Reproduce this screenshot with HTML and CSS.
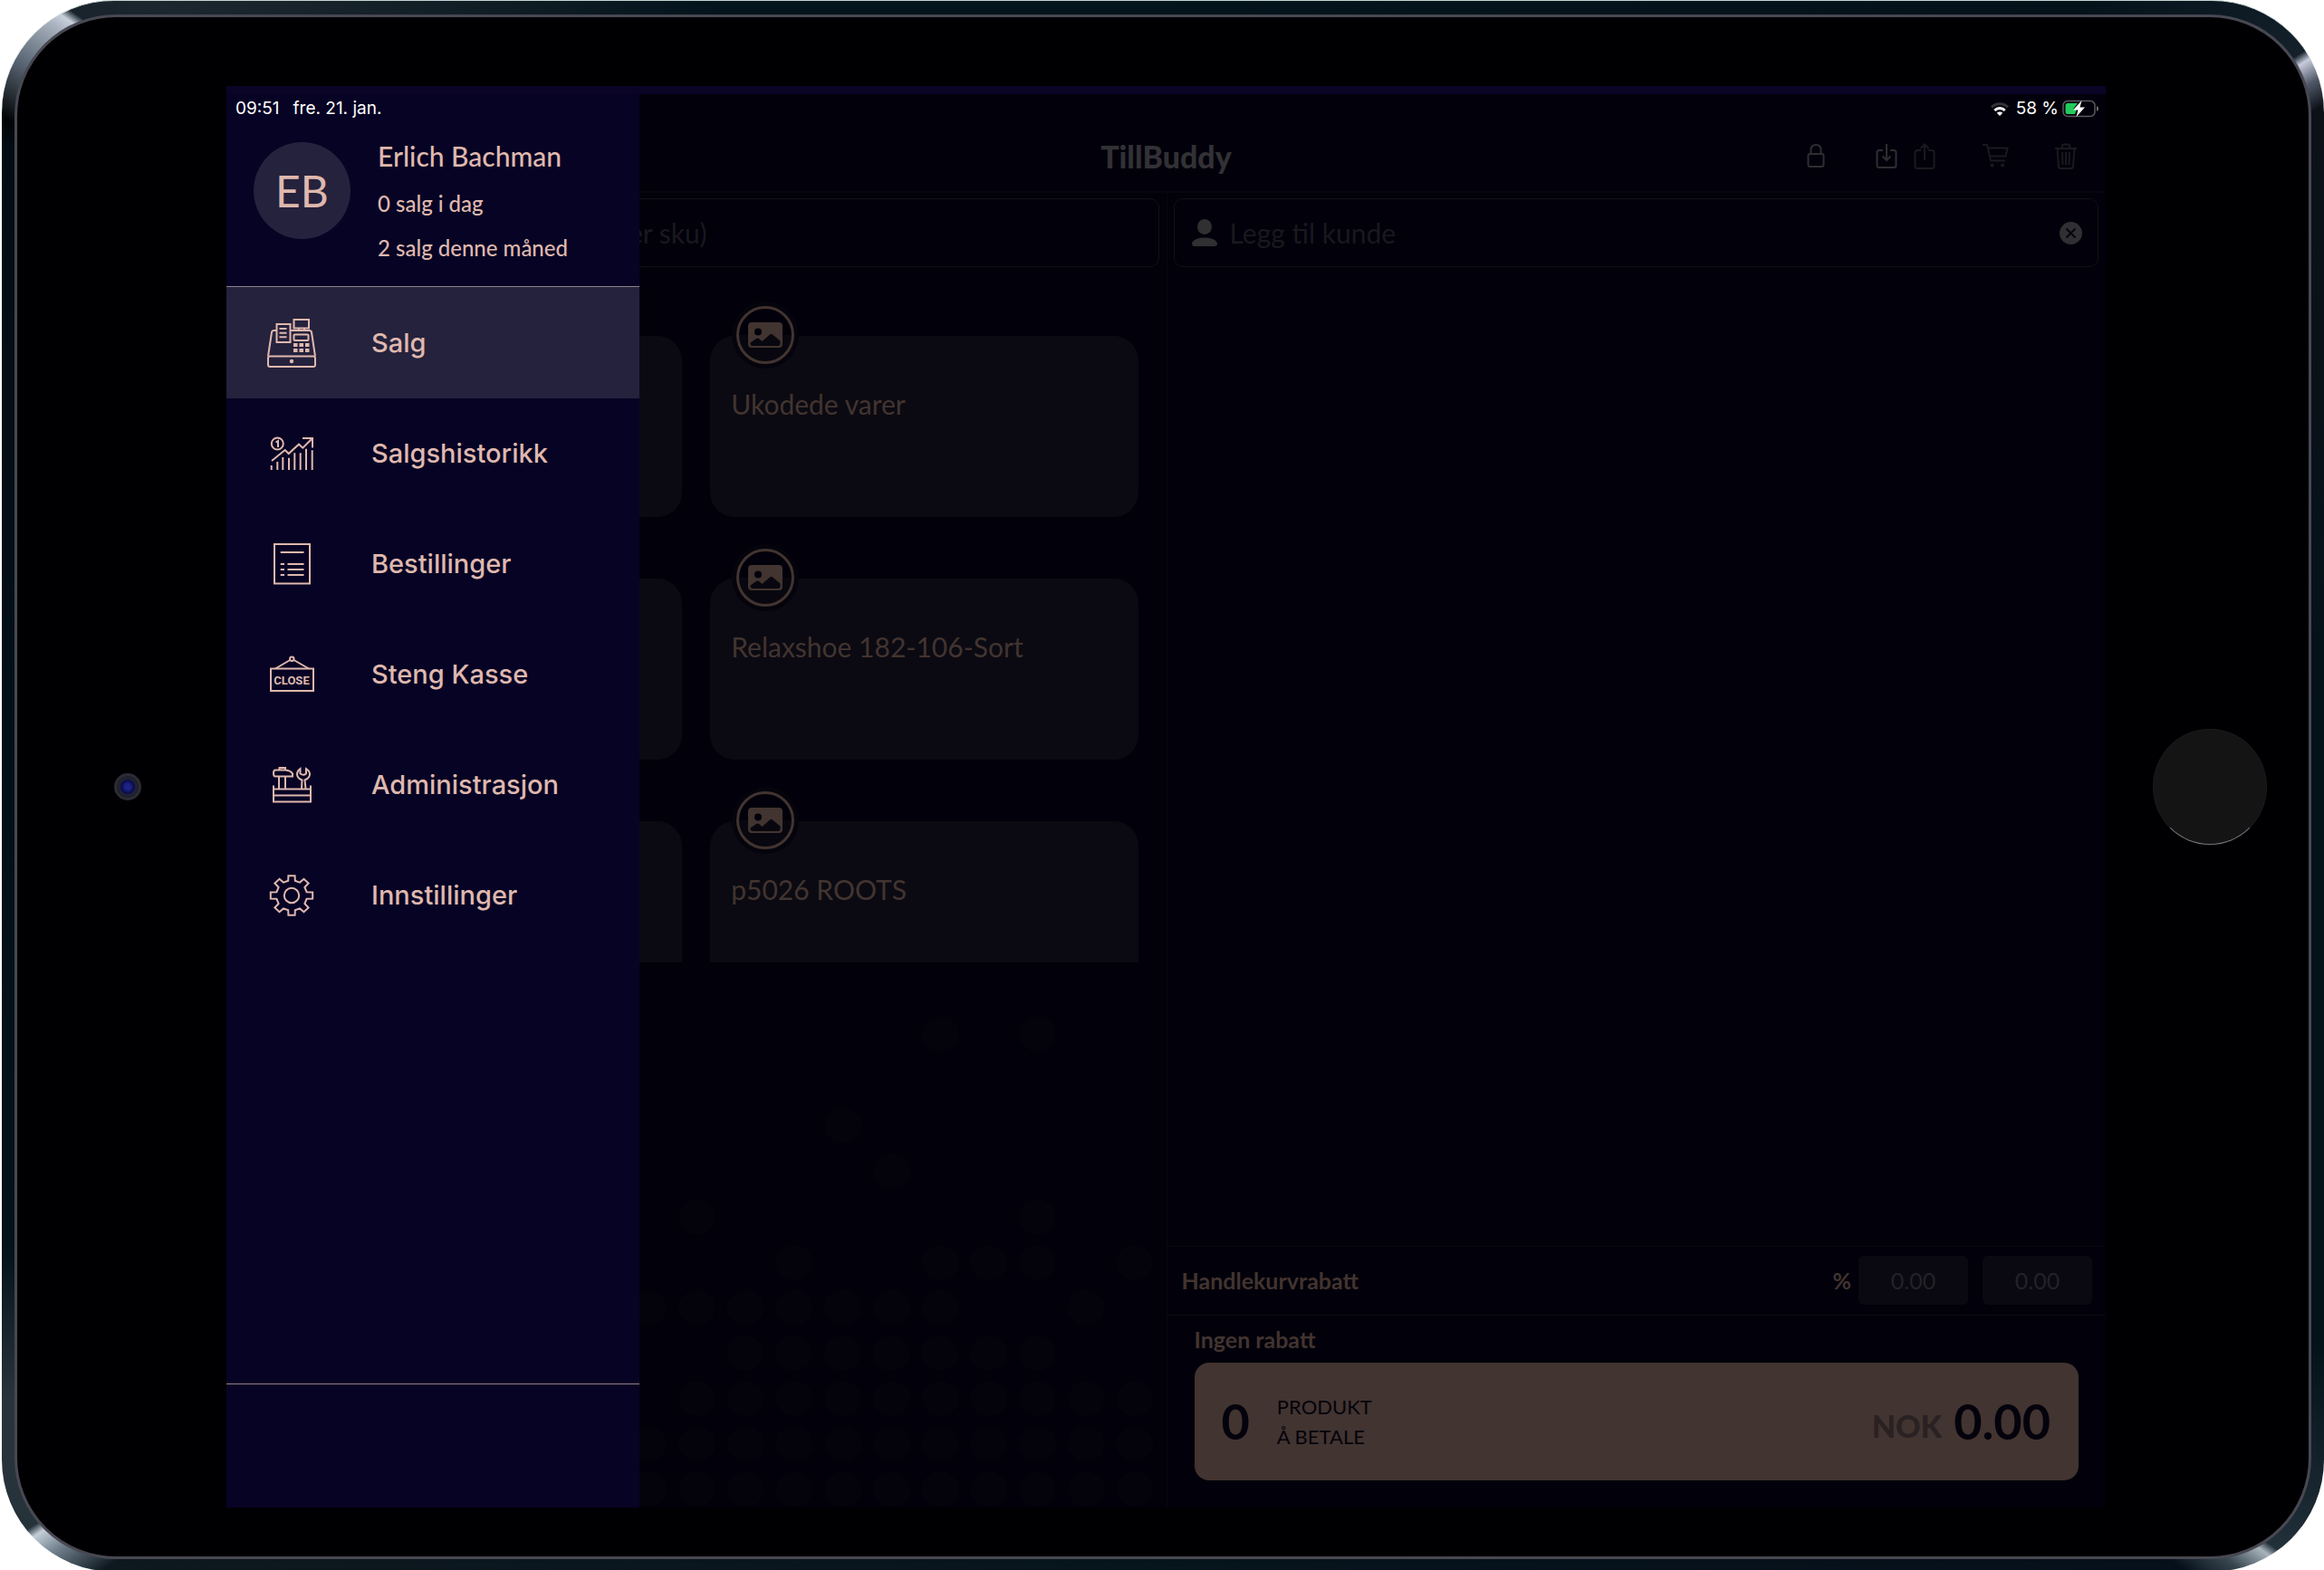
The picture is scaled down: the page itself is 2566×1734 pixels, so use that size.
FILE: index.html
```html
<!DOCTYPE html>
<html lang="nb">
<head>
<meta charset="utf-8">
<meta name="viewport" content="width=device-width, initial-scale=1">
<title>TillBuddy</title>
<link rel="stylesheet" href="styles.css">
</head>
<body>
<div class="device">
  <div class="bezel">
    <div class="camera"></div>
    <div class="screen">
      <div class="status">
        <span>09:51</span>
        <span class="status-date">fre. 21. jan.</span>
        <svg class="wifi" width="20" height="15" viewBox="0 0 20 15" fill="none" stroke="#fff" stroke-width="3">
          <path d="M1 5.500C6 .5 14 .5 19 5.500" stroke="#34333b"/>
          <path d="M4.300 9C7.500 5.800 12.500 5.800 15.700 9"/>
          <path d="M10 15L6.800 11.800C8.500 10.200 11.500 10.200 13.200 11.800Z" fill="#fff" stroke="none"/>
        </svg>
        <span>58 %</span>
        <svg class="battery" width="41" height="20" viewBox="0 0 41 20">
          <rect x="1" y="1.500" width="35" height="17" rx="5" fill="none" stroke="#5c5b62" stroke-width="1.500"/>
          <path d="M38 7Q40 8 40 10T38 13Z" fill="#77767c"/>
          <path d="M6 4H17L12 10.500H16L14 16H6Q3.500 16 3.500 13.500V6.500Q3.500 4 6 4Z" fill="#21cb5b"/>
          <path d="M21.500 1L12 11.500H17.500L15.500 19L25 8.500H19.500Z" fill="#fff"/>
        </svg>
      </div>

      <aside class="drawer">
        <div class="profile">
          <div class="avatar">EB</div>
          <div class="profile-text">
            <strong class="profile-name">Erlich Bachman</strong>
            <span>0 salg i dag</span>
            <span>2 salg denne måned</span>
          </div>
        </div>
        <nav class="menu">
          <a class="menu-item active" href="#salg">
            <svg width="54" height="54" viewBox="0 0 54 54">
              <rect x="29.500" y="1" width="16.500" height="9.500"/>
              <path d="M35 10.500V13M41 10.500V13M10 13H7.500Q5.500 13 5 15L1 41.500M25.500 13H46.500Q48.500 13 49 15L53 41.500"/>
              <rect x="1" y="41.500" width="52" height="11.500" rx="2"/>
              <path d="M10.500 6H25.500V26H10.500ZM13.500 11H21.500M13.500 15.700H21.500M13.500 20.300H21.500"/>
              <rect x="29.500" y="17.500" width="16" height="6.500" rx="1"/>
              <g class="solid"><rect x="29" y="27" width="4.500" height="4"/><rect x="35.500" y="27" width="4.500" height="4"/><rect x="42" y="27" width="4.500" height="4"/><rect x="29" y="33" width="4.500" height="4"/><rect x="35.500" y="33" width="4.500" height="4"/><rect x="42" y="33" width="4.500" height="4"/><circle cx="27" cy="47" r="2.200"/></g>
            </svg>
            Salg
          </a>
          <a class="menu-item" href="#salgshistorikk">
            <svg width="54" height="48" viewBox="-3 -6 54 48">
              <circle cx="8.300" cy="7" r="6.500"/>
              <path d="M6.500 5.500L9 4V11"/>
              <path d="M2 26L16.700 14L20.700 18L32 7.700L36.300 11.700L47 1M36 1H47V11.500"/>
              <path d="M1.700 31V36M8.300 27V36M14.300 22V36M21 22.700V36M27.300 17.300V36M33.700 17.300V36M40 12.700V36M46.700 14.300V36"/>
            </svg>
            Salgshistorikk
          </a>
          <a class="menu-item" href="#bestillinger">
            <svg width="54" height="48" viewBox="-7 -1 54 48">
              <rect x="1" y="1" width="39" height="43.500"/>
              <path d="M7.700 10H33.500M7.700 23H12M15.500 23H33.500M7.700 29H12M15.500 29H33.500M7.700 35H12M15.500 35H33.500"/>
            </svg>
            Bestillinger
          </a>
          <a class="menu-item" href="#steng">
            <svg width="54" height="48" viewBox="-3 -4 54 48">
              <rect x="1" y="13.500" width="47" height="24.500"/>
              <circle cx="24.300" cy="2.700" r="2.200"/>
              <path d="M22.200 4L6 13.500M26.500 4L43 13.500"/>
              <text class="sign-text" x="24" y="31" text-anchor="middle">CLOSE</text>
            </svg>
            Steng Kasse
          </a>
          <a class="menu-item" href="#admin">
            <svg width="54" height="48" viewBox="-6 -4 54 48">
              <path d="M1 20.500V38.500H42V20.500M1 24.500H42M1 31.500H42"/>
              <path d="M7 10.500V24M14 10.500V24M7.500 3V1H14V3M3 3.500H14Q20 4 22 7.500V10.500H3Q1 10.500 1 7Q1 3.500 3 3.500Z"/>
              <path d="M32 24L32.500 14.500Q27 12.500 27 8Q27 4.500 30.500 2V7.500Q34 10 37 7.500V2Q41 4.500 41 8Q41 12.500 35.500 14.500L36.500 24"/>
            </svg>
            Administrasjon
          </a>
          <a class="menu-item" href="#innstillinger">
            <svg width="54" height="48" viewBox="-27 -24 54 48">
              <circle r="8.200"/>
              <path d="M16.600-3.800L23.200-3.600V3.600L16.600 3.800L14.400 9L18.600 13.500L13.500 18.200L9 14.400L3.800 16.200L3.600 21.800H-3.600L-3.800 16.200L-9 14.400L-13.500 18.200L-18.600 13.500L-14.400 9L-16.600 3.800L-23.200 3.600V-3.600L-16.600-3.800L-14.400-9L-18.600-13.500L-13.500-18.200L-9-14.400L-3.800-16.200L-3.600-21.800H3.600L3.800-16.200L9-14.400L13.500-18.200L18.600-13.500L14.400-9Z"/>
            </svg>
            Innstillinger
          </a>
        </nav>
        <div class="drawer-foot"></div>
      </aside>

      <header class="topbar">
        <h1 class="title">TillBuddy</h1>
        <div class="tools">
          <button class="tool" aria-label="Lås"><svg width="32" height="32" viewBox="0 0 32 32"><rect x="7.500" y="13" width="17" height="14" rx="2"/><path d="M10.500 13V8.500Q10.500 3 16 3T21.500 8.500V13"/></svg></button>
          <div class="tool-pair">
            <button class="tool" aria-label="Hent"><svg width="32" height="32" viewBox="0 0 32 32"><path d="M12 9H8Q5.500 9 5.500 11.500V25.500Q5.500 28 8 28H24Q26.500 28 26.500 25.500V11.500Q26.500 9 24 9H20M16 2V20M11.500 15.500L16 20L20.500 15.500"/></svg></button>
            <button class="tool dim" aria-label="Del"><svg width="32" height="32" viewBox="0 0 32 32"><path d="M12 9H8Q5.500 9 5.500 11.500V26.500Q5.500 29 8 29H24Q26.500 29 26.500 26.500V11.500Q26.500 9 24 9H20M16 20V2.500M11.500 7L16 2.500L20.500 7"/></svg></button>
          </div>
          <button class="tool dim" aria-label="Handlekurv"><svg width="32" height="32" viewBox="0 0 32 32"><path d="M2 3H7L11 20.500H27M8 6.500H29.500L27.500 15.500H10"/><circle class="wheel" cx="12.500" cy="25.500" r="2"/><circle class="wheel" cx="24" cy="25.500" r="2"/></svg></button>
          <button class="tool dim" aria-label="Slett"><svg width="32" height="32" viewBox="0 0 32 32"><path d="M4 7H28M12 7V4Q12 2.500 13.500 2.500H18.500Q20 2.500 20 4V7M6.500 7L8 27Q8 29 10 29H22Q24 29 24 27L25.500 7M12 11L12.500 25M16 11V25M20 11L19.500 25"/></svg></button>
        </div>
      </header>

      <main class="columns">
        <section class="catalog">
          <input class="field search" type="search" placeholder="er sku)" aria-label="Søk">
          <div class="products">
            <article class="card"></article>
            <article class="card">
              <div class="badge"><svg width="38" height="28" viewBox="0 0 38 28"><use href="#picture"/></svg></div>
              Ukodede varer
            </article>
            <article class="card"></article>
            <article class="card">
              <div class="badge"><svg width="38" height="28" viewBox="0 0 38 28"><use href="#picture"/></svg></div>
              Relaxshoe 182-106-Sort
            </article>
            <article class="card"></article>
            <article class="card">
              <div class="badge"><svg width="38" height="28" viewBox="0 0 38 28"><use href="#picture"/></svg></div>
              p5026 ROOTS
            </article>
          </div>
          <svg class="dots" viewBox="0 0 1036 601" preserveAspectRatio="xMaxYMax slice">
            <defs>
              <symbol id="picture" viewBox="0 0 38 28"><path fill-rule="evenodd" d="M4 0H34Q38 0 38 4V24Q38 28 34 28H4Q0 28 0 24V4Q0 0 4 0ZM11 6.500A4 4 0 1 0 11 14.500A4 4 0 1 0 11 6.500ZM2.500 23Q2.500 26 5 26H33Q35.500 26 35.500 23V20.500L27 13.500Q25.500 12.500 24 13.500L15.500 21L12 18Q10.500 16.800 9 18L2.500 22.500Z"/></symbol>
              <g id="d1"><ellipse rx="20.500" ry="19.500"/></g>
              <g id="d5"><use href="#d1"/><use href="#d1" x="53.600"/><use href="#d1" x="107.200"/><use href="#d1" x="160.800"/><use href="#d1" x="214.400"/></g>
            </defs>
            <use href="#d1" x="787" y="79"/><use href="#d1" x="894" y="79"/>
            <use href="#d1" x="680" y="180"/><use href="#d1" x="733" y="230"/>
            <use href="#d1" x="519" y="281"/><use href="#d1" x="894" y="281"/>
            <use href="#d1" x="626" y="331"/><use href="#d1" x="787" y="331"/><use href="#d1" x="840" y="331"/><use href="#d1" x="894" y="331"/><use href="#d1" x="1001" y="331"/>
            <use href="#d5" x="465" y="381"/><use href="#d1" x="733" y="381"/><use href="#d1" x="787" y="381"/><use href="#d1" x="948" y="381"/>
            <use href="#d5" x="572" y="431"/><use href="#d1" x="840" y="431"/><use href="#d1" x="894" y="431"/>
            <use href="#d5" x="519" y="481"/><use href="#d5" x="787" y="481"/>
            <use href="#d1" x="465" y="531"/><use href="#d5" x="519" y="531"/><use href="#d5" x="787" y="531"/>
            <use href="#d1" x="465" y="581"/><use href="#d5" x="519" y="581"/><use href="#d5" x="787" y="581"/>
          </svg>
        </section>

        <section class="cart">
          <label class="field customer">
            <svg width="28" height="30" viewBox="0 0 28 30"><ellipse cx="14" cy="8.500" rx="8" ry="8.500"/><path d="M0 27C1 22 8 20.500 14 20.500S27 22 28 27Q28 30 25 30H3Q0 30 0 27Z"/></svg>
            <input type="text" placeholder="Legg til kunde" aria-label="Legg til kunde">
            <button class="clear" aria-label="Fjern"><svg width="25" height="25" viewBox="0 0 25 25"><path d="M7.500 7.500L17.500 17.500M17.500 7.500L7.500 17.500"/></svg></button>
          </label>
          <div class="basket"></div>
          <div class="discount">
            <span class="discount-label">Handlekurvrabatt</span>
            <label for="percent">%</label>
            <input class="amount" id="percent" type="text" placeholder="0.00">
            <input class="amount" type="text" placeholder="0.00" aria-label="Rabattbeløp">
          </div>
          <div class="summary">
            <p class="no-discount">Ingen rabatt</p>
            <button class="pay">
              <span class="count">0</span>
              <span class="pay-text">PRODUKT<br>Å BETALE</span>
              <span class="currency">NOK</span>
              <span class="count">0.00</span>
            </button>
          </div>
        </section>
      </main>
    </div>
    <button class="home" aria-label="Hjem"></button>
  </div>
</div>
</body>
</html>
```
FILE: styles.css
```css
* { box-sizing: border-box; }

body {
  margin: 0;
  background: #fff;
  font-family: Lato, "Liberation Sans", sans-serif;
}

button, input { font: inherit; border: 0; padding: 0; }
a { text-decoration: none; }
button { background: none; }

/* Tablet shell */
.device {
  display: flex;
  min-height: 100vh;
  margin: 0 0 0 2px;
  padding: 15px 14px 14px 14px;
  border-radius: 124px;
  border-top: 1px solid #c5d3d3;
  background: conic-gradient(
    #04141c 0deg, #04121a 50deg, #14202a 57.2deg, #c8ccdc 57.6deg, #505868 58.5deg, #0c1118 59.600deg,
    #04121a 90deg, #04121a 116deg, #22303a 124.4deg, #a8b4bc 124.8deg, #384650 126deg, #06101a 127.500deg,
    #06141c 180deg, #0d181f 233.500deg, #70808c 235.400deg, #c4ced8 236.400deg, #26323a 236.800deg, #28343c 242deg, #04121a 248deg,
    #020c14 299deg, #020506 300deg, #566270 302.300deg, #aab4c0 304.500deg, #c8d0dc 305deg, #18232b 305.400deg, #1c262e 308deg, #04141c 330deg, #04141c 360deg);
}

.bezel {
  flex: 1;
  display: grid;
  grid-template-columns: 231px minmax(0, 1fr) 224px;
  align-items: center;
  border: 3px solid #484852;
  border-radius: 112px;
  background: #000003;
}

.camera {
  justify-self: center;
  width: 30px;
  height: 30px;
  margin-left: 13px;
  border: 3px solid #2b2c35;
  border-radius: 50%;
  background: radial-gradient(circle, #1c2480 0 3px, #0a0a50 7px, #23242f 9px, #14151c 100%);
}

.home {
  justify-self: center;
  width: 126px;
  height: 128px;
  margin-left: 6px;
  border-radius: 50%;
  background: #141414;
  border: 1px solid #1b1b1d;
  border-bottom-color: #77777b;
}

.screen {
  position: relative;
  align-self: stretch;
  display: flex;
  flex-direction: column;
  margin: 76px 0 54px;
  border-top: 9px solid #0a0427;
  background: #02000a;
}

/* Status bar floats above the drawer */
.status {
  position: absolute;
  z-index: 2;
  inset: 0 7px auto 10px;
  display: flex;
  align-items: center;
  height: 32px;
  color: #fff;
  font: 400 19px/32px Inter, sans-serif;
}
.status-date { margin-left: 15px; }
.wifi { margin: 0 8px 0 auto; }
.battery { margin-left: 4px; }

/* Drawer */
.drawer {
  position: absolute;
  z-index: 1;
  inset: 0 auto 0 0;
  display: flex;
  flex-direction: column;
  width: 456px;
  background: #070324;
  color: #dfb8ae;
}

.profile {
  display: flex;
  gap: 30px;
  height: 213px;
  padding: 48px 0 0 30px;
  border-bottom: 1px solid #93808a;
}

.avatar {
  width: 107px;
  height: 107px;
  margin-top: 5px;
  border-radius: 50%;
  background: #25223d;
  font-size: 48px;
  line-height: 107px;
  text-align: center;
}

.profile-text {
  display: flex;
  flex-direction: column;
  font-size: 24px;
  font-weight: 500;
  line-height: 49px;
}
.profile-name { font-size: 30px; font-weight: 500; line-height: 40px; margin-bottom: 8px; }

.menu { flex: 1; }
.menu-item {
  display: flex;
  align-items: center;
  gap: 61px;
  height: 122px;
  padding-left: 45px;
  color: inherit;
  font: 500 29px/40px Inter, sans-serif;
}
.menu-item.active { height: 123px; background: #25223d; }
.menu svg { fill: none; stroke: #dfb8ae; stroke-width: 2; }
.menu .solid { fill: #dfb8ae; stroke: none; }
.menu .sign-text { fill: #dfb8ae; stroke: none; font: 700 13px Roboto, sans-serif; }

.drawer-foot { height: 137px; border-top: 1px solid #93808a; }

/* Top bar */
.topbar {
  display: grid;
  grid-template-columns: 1fr auto 1fr;
  align-items: center;
  height: 109px;
  padding-top: 30px;
  border-bottom: 2px solid #07060f;
}
.title {
  grid-column: 2;
  margin: 0;
  color: #323135;
  font-size: 34px;
  font-weight: 900;
  line-height: 40px;
}
.tools {
  display: flex;
  justify-content: flex-end;
  gap: 46px;
  padding-right: 28px;
}
.tool-pair { display: flex; gap: 10px; }
.tool { height: 32px; color: #2e2e32; }
.tool.dim { color: #1a1920; }
.tool svg { display: block; fill: none; stroke: currentColor; stroke-width: 2; }
.tool .wheel { fill: currentColor; stroke: none; }

/* Two columns */
.columns {
  flex: 1;
  display: grid;
  grid-template-columns: minmax(0, 1fr) minmax(0, 1fr);
}

.field {
  height: 76px;
  margin: 6px 8px 0;
  border: 1px solid #111018;
  border-radius: 10px;
  background: none;
  font-size: 30px;
}
.field::placeholder, .field input::placeholder { color: #19181f; opacity: 1; }

.catalog { display: flex; flex-direction: column; min-width: 0; }
.search { padding-left: 435px; }

.products {
  display: grid;
  grid-template-columns: 1fr 1fr;
  grid-auto-rows: 200px;
  gap: 68px 31px;
  height: 768px;
  padding: 76px 31px 0;
  overflow: hidden;
}
.card {
  position: relative;
  padding: 55px 23px;
  border-radius: 27px;
  background: #0b0a12;
  color: #423430;
  font-size: 30px;
  line-height: 40px;
}
.badge {
  position: absolute;
  top: -33px;
  left: 29px;
  display: grid;
  place-items: center;
  width: 64px;
  height: 64px;
  border: 3px solid #423430;
  border-radius: 50%;
  background: linear-gradient(#02000a 50%, #08070f 50%);
  box-shadow: 0 0 0 5px #05040c;
  fill: #423430;
}
.dots { flex: 1; width: 100%; min-height: 0; height: 601px; fill: #04030c; }

/* Cart */
.cart { display: flex; flex-direction: column; border-left: 1px solid #08070f; }
.customer {
  display: flex;
  align-items: center;
  gap: 14px;
  margin-left: 7px;
  padding: 0 17px 0 19px;
  fill: #302f31;
}
.customer input { flex: 1; min-width: 0; background: none; color: #444; }
.clear { width: 25px; height: 25px; border-radius: 50%; background: #302f31; }
.clear svg { display: block; stroke: #06050c; stroke-width: 2; }

.basket { flex: 1; }

.discount {
  display: flex;
  align-items: center;
  gap: 16px;
  height: 77px;
  padding: 0 15px 0 16px;
  border-top: 1px solid #08070f;
  border-bottom: 1px solid #0b0a12;
  color: #423430;
  font-size: 25px;
  font-weight: 700;
}
.discount-label { margin-right: auto; }
.discount label { margin-right: -8px; }
.amount {
  width: 121px;
  height: 54px;
  border-radius: 6px;
  background: #0a0911;
  font-weight: 400;
  text-align: center;
}
.amount::placeholder { color: #232227; opacity: 1; }

.summary { padding: 0 30px 30px; }
.no-discount {
  margin: 0;
  color: #423430;
  font-size: 25px;
  font-weight: 700;
  line-height: 52px;
}
.pay {
  display: flex;
  align-items: center;
  width: 100%;
  height: 130px;
  padding: 0 31px 0 30px;
  border-radius: 16px;
  background: #423430;
  color: #04020c;
  text-align: left;
}
.count { font-size: 54px; font-weight: 700; }
.pay-text { margin: 0 auto 0 30px; font-size: 22px; line-height: 33px; }
.currency { margin: 10px 13px 0 0; color: #2a2123; font-size: 34px; font-weight: 900; }
```
